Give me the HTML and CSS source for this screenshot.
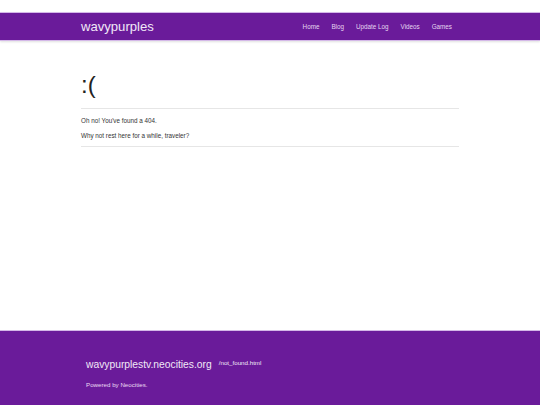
FILE: index.html
```html
<!DOCTYPE html>
<html lang="en">
<head>
<meta charset="utf-8">
<title>wavypurples - 404</title>
<link rel="stylesheet" href="styles.css">
</head>
<body>
<header class="site-header">
  <div class="container header-inner">
    <a class="brand" href="#">wavypurples</a>
    <nav class="nav">
      <a href="#">Home</a>
      <a href="#">Blog</a>
      <a href="#">Update Log</a>
      <a href="#">Videos</a>
      <a href="#">Games</a>
    </nav>
  </div>
</header>
<main class="main">
  <div class="container">
    <h1 class="sad">:(</h1>
    <hr class="rule">
    <p class="msg">Oh no! You've found a 404.</p>
    <p class="msg">Why not rest here for a while, traveler?</p>
    <hr class="rule rule-end">
  </div>
</main>
<footer class="site-footer">
  <div class="container footer-inner">
    <div class="footer-row">
      <span class="site-name">wavypurplestv.neocities.org</span>
      <span class="page-path">/not_found.html</span>
    </div>
    <p class="powered">Powered by Neocities.</p>
  </div>
</footer>
</body>
</html>
```
FILE: styles.css
```css
html, body {
  margin: 0;
  padding: 0;
}
body {
  font-family: "Liberation Sans", Arial, sans-serif;
  color: #333;
  background: #fff;
  min-height: 100vh;
  display: flex;
  flex-direction: column;
}
.container {
  width: 378px;
  margin: 0 auto;
}
.site-header {
  margin-top: 12px;
  background: #6a1b9a;
  border-top: 1px solid #d4b8e8;
  border-bottom: 1px solid #d4b8e8;
  box-shadow: 0 1px 2px rgba(0,0,0,0.12);
}
.header-inner {
  height: 27px;
  display: flex;
  align-items: center;
  justify-content: space-between;
}
.brand {
  color: #f1e8f7;
  text-decoration: none;
  font-size: 13.1px;
  line-height: 16px;
}
.nav {
  display: flex;
  gap: 12px;
  margin-right: 7px;
}
.nav a {
  color: #e6d6f1;
  text-decoration: none;
  font-size: 6.3px;
  line-height: 8px;
}
.main {
  flex: 1;
}
.sad {
  margin: 31px 0 0;
  font-weight: normal;
  font-size: 24px;
  line-height: 26px;
  color: #222;
}
.rule {
  border: 0;
  border-top: 1px solid #e6e6e6;
  margin: 10px 0 7px;
}
.msg {
  margin: 0 0 6px;
  font-size: 6.3px;
  line-height: 9px;
  color: #333;
}
.rule-end {
  margin-top: 2px;
}
.site-footer {
  background: #6a1b9a;
  border-top: 1px solid #d4b8e8;
  padding: 28px 0 16px;
  color: #f1e8f7;
}
.footer-inner {
  box-sizing: border-box;
  padding-left: 5px;
}
.footer-row {
  display: flex;
  align-items: flex-start;
  gap: 7px;
}
.site-name {
  font-size: 10.3px;
  line-height: 12px;
}
.page-path {
  font-size: 6.2px;
  line-height: 8px;
  margin-top: -0.5px;
}
.powered {
  margin: 10px 0 0;
  font-size: 6.2px;
  line-height: 8px;
  color: #eadcf3;
}
```
